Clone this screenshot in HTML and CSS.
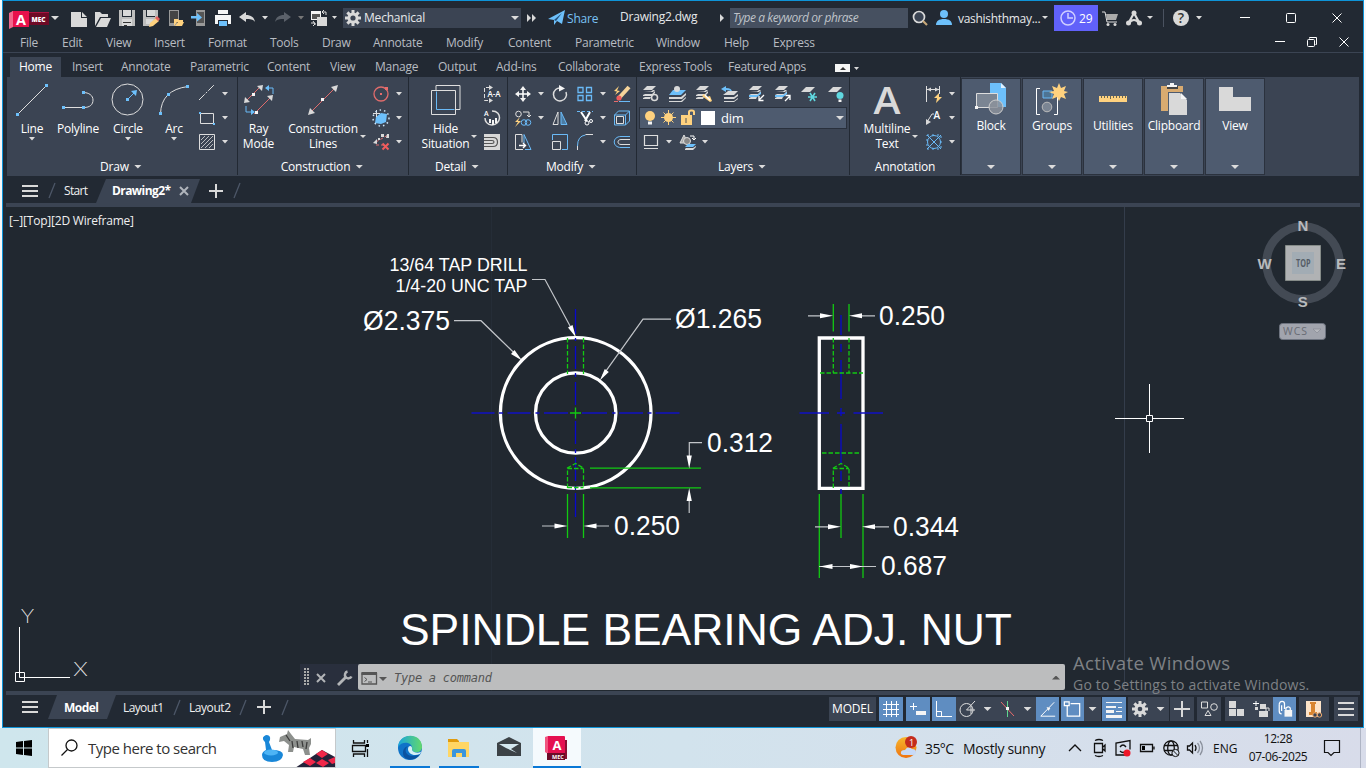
FILE: index.html
```html
<!DOCTYPE html>
<html lang="en">
<head>
<meta charset="utf-8">
<title>Drawing2.dwg</title>
<link rel="stylesheet" href="styles.css">
</head>
<body>
<div class="desk">
<div class="app">
<header class="title">
  <svg class="logo" width="40" height="20" viewBox="9 9 40 20"><path fill="#a8123f" d="M27 11h22v13H27z"/><path fill="#6e0a26" d="M29 12h20v12H29z"/><path fill="#e8114b" d="M12 10h17v16H12z"/><path fill="#f0688c" d="M9 12l4-2v16l-4 2z"/><text x="16" y="23.500" font-size="15" font-weight="700" textLength="10" lengthAdjust="spacingAndGlyphs">A</text><text x="31.500" y="21" font-size="7" font-weight="800" textLength="14" lengthAdjust="spacingAndGlyphs">MEC</text></svg>
  <i class="ar big"></i>
  <svg class="ic ml6" viewBox="0 0 24 24"><path class="fl" d="M4 6h10v6h6v9H4zM15 6l5 5h-5z"/></svg>
  <svg class="ic" viewBox="0 0 24 24"><path class="fl" d="M4 20V6h5l2 2h6v3H9zM5 21l5-9h10l-4 9z"/></svg>
  <svg class="ic" viewBox="0 0 24 24"><path fill="#bdbdbd" d="M4 4h3v7h10V4h3v16H4z"/><path class="fl" d="M8 4h8v6H8zM7 13h10v7H7z"/><path fill="#333" d="M8 16h8v1H8zM9 19h3v1H9z"/></svg>
  <svg class="ic" viewBox="0 0 24 24"><path fill="#bdbdbd" d="M4 4h3v7h9V4h3v7l-7 9H4z"/><path class="fl" d="M8 4h8v6H8zM7 13h8l-4 5H7z"/><path class="fy" d="M10 21l1-4 6-5 3 3-6 5z"/><path fill="#e56262" d="M16 12l2-2 3 3-2 2z"/></svg>
  <svg class="ic" viewBox="0 0 24 24"><path fill="#999" d="M6 4h10v16H6z"/><path fill="#444" d="M7 5h8v12H7z"/><path class="fy" d="M11 20v-7h4l1 1h4v2h-6zM12 20l3-4h6l-2 4z"/></svg>
  <svg class="ic" viewBox="0 0 24 24"><path fill="#999" d="M9 4h9v16H9z"/><path fill="#555" d="M10 6h7v11h-7z"/><path class="fb" d="M4 10h6V7l5 4.500-5 4v-3H4z"/></svg>
  <svg class="ic" viewBox="0 0 24 24"><path class="fw" d="M7 4h10v4H7zM4 9h16v9h-3v-4H7v4H4z"/><path class="fb" d="M8 15h8v5H8z"/></svg>
  <svg class="ic" viewBox="0 0 24 24"><path class="fl" d="M4 11l7-5v3c5 0 8 2 9 7-2-3-5-3-9-3v3z"/></svg>
  <i class="ar"></i>
  <svg class="ic" viewBox="0 0 24 24"><path fill="#5b616a" d="M20 11l-7-5v3c-5 0-8 2-9 7 2-3 5-3 9-3v3z"/></svg>
  <i class="ar dim"></i>
  <svg class="ic" viewBox="0 0 24 24"><path class="fw" d="M4 5h10v9H4zM10 11h10v9H10z"/><path d="M5 8h8v5H5z" fill="#555"/><path class="fl" d="M10 11h10v9H10z"/><path class="l" d="M15 6h4v3M17 4l-2 2 2 2M4 17h4v2M6 15l2 3-2 2"/></svg>
  <i class="ar w7"></i>
  <div class="combo"><svg width="20" height="20" viewBox="-10 -10 20 20"><g class="fl"><circle r="5.500"/><path id="teeth" d="M-1.500-8h3v16h-3zM-8-1.500H8v3H-8zM-6.700-4.600l2.100-2.100L6.700 4.600 4.600 6.700zM4.600-6.700l2.100 2.100L-4.600 6.700-6.700 4.600z"/></g><circle r="2.600" fill="#3b4453"/></svg><span>Mechanical</span><i class="ar big"></i></div>
  <svg width="20" height="20" viewBox="0 0 20 20"><path class="fl" d="M6 6l4 4-4 4zM11 6l4 4-4 4z"/></svg>
  <svg class="plane" width="18" height="20" viewBox="1 0 18 20"><path class="fb" d="M0 11L17 2l-3 14-5-3-3 4v-5z"/><path d="M6 12l8-7-6 8" fill="#24507a"/></svg>
  <span class="share">Share</span>
  <span class="doc">Drawing2.dwg</span>
  <svg width="12" height="20" viewBox="0 0 12 20"><path class="fl" d="M4 6l4 4-4 4z"/></svg>
  <div class="find">Type a keyword or phrase</div>
  <svg class="ic" viewBox="0 0 24 24"><circle cx="11" cy="11" r="5.500" fill="#3b4453" stroke="#d9d9d9" stroke-width="1.700"/><path d="M15 15l4 4" stroke="#c9a878" stroke-width="2.200"/></svg>
  <svg class="ic" viewBox="0 0 24 24"><circle cx="12" cy="8" r="4" class="fb"/><path class="fb" d="M4 19c0-4 3-6 8-6s8 2 8 6z"/></svg>
  <span class="user">vashishthmay...</span><i class="ar w10"></i>
  <div class="trial"><svg width="18" height="18" viewBox="0 0 18 18"><circle cx="9" cy="9" r="7" fill="none" stroke="#d0cfff" stroke-width="1.500"/><path d="M9 4v5h5" fill="none" stroke="#d0cfff" stroke-width="1.500"/></svg><span>29</span></div>
  <svg class="ic" viewBox="0 0 24 24"><path class="l" d="M4 6h3l2 10h10"/><path fill="#aaa" d="M8 8h12l-2 6H9z"/><circle cx="10" cy="18.500" r="1.500" class="fl"/><circle cx="17" cy="18.500" r="1.500" class="fl"/></svg>
  <svg class="ic" viewBox="0 0 24 24"><path d="M12 7L6 18M12 7l6 11M7 17c3-4 7-4 10 0" fill="none" stroke="#d9d9d9" stroke-width="2.200"/><circle cx="12" cy="7" r="2.500" class="fl"/><circle cx="6.500" cy="17" r="2.500" class="fl"/><circle cx="17.500" cy="17" r="2.500" class="fl"/></svg>
  <i class="ar w8"></i><i class="vsep"></i>
  <svg class="ic q" viewBox="0 0 24 24"><circle cx="12" cy="12" r="8" class="fl"/><text x="12" y="17" text-anchor="middle" font-size="14" font-weight="600" class="qm">?</text></svg>
  <i class="ar"></i>
  <svg class="win first" viewBox="0 0 46 24"><path class="n" d="M18 11.500h10"/></svg>
  <svg class="win" viewBox="0 0 46 24"><rect class="n" x="18.500" y="7.500" width="9" height="9" rx="1"/></svg>
  <svg class="win" viewBox="0 0 46 24"><path class="n" d="M18.500 7.500l9 9M27.500 7.500l-9 9"/></svg>
</header>
<nav class="menu"><span>File</span><span>Edit</span><span>View</span><span>Insert</span><span>Format</span><span>Tools</span><span>Draw</span><span>Annotate</span><span>Modify</span><span>Content</span><span>Parametric</span><span>Window</span><span>Help</span><span>Express</span>
  <svg class="mdi" width="84" height="18" viewBox="1270 33 84 18"><path class="n" d="M1275 41.500h10M1339.500 37.500l9 9M1348.500 37.500l-9 9M1309.500 38.500v-1h7v7h-1"/><rect class="n" x="1307.500" y="39.500" width="7" height="7" rx="1"/></svg>
</nav>
<nav class="tabs"><span class="on">Home</span><span>Insert</span><span>Annotate</span><span>Parametric</span><span>Content</span><span>View</span><span>Manage</span><span>Output</span><span>Add-ins</span><span>Collaborate</span><span>Express Tools</span><span>Featured Apps</span><svg width="26" height="10" viewBox="0 0 26 10"><path class="fw" d="M0 1h15v8H0z"/><path d="M5 7l3-3 3 3z" fill="#333"/><path class="fl" d="M19 4h5l-2.500 3z"/></svg></nav>
<section class="ribbon">
  <div class="panel draw"><div class="tools">
    <div class="btn w48"><svg viewBox="0 0 36 36"><path class="l" d="M4 32L32 4"/><path class="fb" d="M2 31h3v3H2zM31 2h3v3h-3z"/></svg><span>Line</span><i class="ar"></i></div>
    <div class="btn w46"><svg viewBox="0 0 36 36"><path class="l" d="M3 25.500h21c6 0 9-3 9-7.500s-4-7.500-10-7.500"/><path class="fb" d="M2 24h3v3H2zM22 24h3v3h-3zM22 9h3v3h-3z"/></svg><span>Polyline</span></div>
    <div class="btn w54"><svg viewBox="0 0 36 36"><circle class="l" cx="17.500" cy="17.500" r="15.500"/><path class="b" d="M18 17l6-6"/><path class="fb" d="M16 16h3v3h-3zM27 8l-1 6-5-5z"/></svg><span>Circle</span><i class="ar"></i></div>
    <div class="btn w40"><svg viewBox="0 0 36 36"><path class="l" d="M4.500 32Q5 8 32 4.500"/><path class="fb" d="M3 30h3v3H3zM11 11h3v3h-3zM30 3h3v3h-3z"/></svg><span>Arc</span><i class="ar"></i></div>
    <div class="small one">
      <svg viewBox="0 0 24 24"><path class="l" stroke-dasharray="8 1.500 2 1.500" d="M4 18L19 3"/></svg><i class="ar"></i>
      <svg viewBox="0 0 24 24"><path class="l" d="M5.500 7.500h13v10h-13z"/><path class="fb" d="M4 6h2v2H4zM18 17h2v2h-2z"/></svg><i class="ar"></i>
      <svg viewBox="0 0 24 24"><path class="l" d="M4.500 4.500h15v15h-15z"/><path class="l" stroke-width=".8" d="M6 10l4-4M6 14l8-8M6 18L18 6M10 18l8-8M14 18l4-4"/></svg><i class="ar"></i>
    </div></div><div class="cap">Draw<i class="ar big"></i></div></div>
  <div class="panel cons"><div class="tools">
    <div class="btn w41"><svg viewBox="0 0 36 36"><path d="M6 18L19 5M13 32L30 15" stroke="#e06c6c"/><path class="fl" d="M22 3l-1 6-5-5zM3 21l1-6 5 5zM32 13l-1 6-5-5z"/><path class="fw" d="M11 11h3v3h-3zM14 29h3v3h-3z"/><path class="b" d="M26 6h6v6M5 24v6h6"/><path class="fb" d="M24 6l4-3v6zM14 30l-4-3v6z"/></svg><span>Ray<br>Mode</span></div>
    <div class="btn w76"><svg viewBox="0 0 36 36"><path d="M7 29L29 7" stroke="#e06c6c"/><path class="fl" d="M33 3l-2 7-5-5zM3 33l2-7 5 5z"/><path class="fw" d="M16 16h3v3h-3z"/></svg><span>Construction<br>Lines</span></div><i class="ar side"></i>
    <div class="small one">
      <svg viewBox="0 0 24 24"><circle cx="12" cy="12" r="7" fill="none" stroke="#e06c6c" stroke-width="1.300"/><path fill="#e86c6c" d="M11 11h2v2h-2zM16 5h3v3h-3z"/></svg><i class="ar"></i>
      <svg viewBox="0 0 24 24"><path class="fb" d="M7 11l5-4 6 1-1 8-5 2-6-1z"/><path class="l" d="M4 7.500h7M7.500 4v7"/><circle cx="12" cy="12" r="8" fill="none" stroke="#cde6fa" stroke-width="1.500" stroke-dasharray="1.500 3"/></svg><i class="ar"></i>
      <svg viewBox="0 0 24 24"><path d="M7 12L19 5M7 15h8" stroke="#e06c6c" stroke-dasharray="3 2"/><path class="fl" d="M4 13l4-4v5zM18 4h2v4h-3zM12 4h3v3h-3zM9 8h2v2H9z"/><path d="M13.500 13.500l6 6M19.500 13.500l-6 6" stroke="#f05c5c" stroke-width="2"/></svg><i class="ar"></i>
    </div></div><div class="cap">Construction<i class="ar big"></i></div></div>
  <div class="panel det"><div class="tools">
    <div class="btn w51"><svg viewBox="0 0 36 36"><path class="l" d="M8 8V3.500h24v24h-4.500M3.500 8.500h24v24h-24z"/><path class="b" d="M8.500 9.500v18h18"/></svg><span>Hide<br>Situation</span></div><i class="ar side"></i>
    <div class="small">
      <svg viewBox="0 0 24 24"><path class="l" stroke-dasharray="4 2" d="M10 5.500H4.500v13H10"/><path class="fl" d="M9 3l4 2.500-4 2.500zM9 16l4 2.500-4 2.500z"/><text x="7.500" y="15" font-size="8" font-weight="600" textLength="13">A-A</text></svg>
      <svg viewBox="0 0 24 24"><path class="l" stroke-width="1.500" d="M12 5c11 0 9 14 0 14-5 0-7-4-7-7"/><text x="4" y="10" font-size="7" font-weight="600">A</text><path class="fw" d="M9 13h2v4H9zM12 14h2v5h-2zM15 12h2v5h-2z"/></svg>
      <svg viewBox="0 0 24 24"><path class="fl" d="M4 4h16v16H4z"/><path d="M4 7.500h9q4.500 0 4.500 4.500t-4.500 4.500H4M4 10.500h8q2 0 2 1.500t-2 1.500H4" fill="none" stroke="#555" stroke-width="1.200"/></svg>
    </div></div><div class="cap">Detail<i class="ar big"></i></div></div>
  <div class="panel mod"><div class="tools"><div class="small mg">
    <svg viewBox="0 0 24 24"><path class="n" stroke-width="1.500" d="M12 6v12M6 12h12"/><path class="fw" d="M12 4l3 4H9zM12 20l3-4H9zM4 12l4-3v6zM20 12l-4-3v6z"/></svg><i class="ar"></i>
    <svg viewBox="0 0 24 24"><path class="l" stroke-width="1.500" d="M13 6a6.500 6.500 0 1 0 5 4"/><path class="fw" d="M11 3l6 3.500-6 3z"/></svg>
    <svg viewBox="0 0 24 24"><path class="b" stroke-width="1.300" d="M5 5.500h5v5H5zM13.500 5.500h5v5h-5zM5 13.500h5v5H5zM13.500 13.500h5v5h-5z"/></svg><i class="ar"></i>
    <svg viewBox="0 0 24 24"><path d="M9 16L19 5" stroke="#f6d49a" stroke-width="4"/><circle cx="9" cy="16" r="2.600" fill="#f05c5c"/><path class="fy" d="M9 4L4 9l3 .5L5 13l5-4-3-.5z"/><path class="b" d="M9 19.500h11"/><path class="r" d="M4 19.500h4"/></svg>
    <svg viewBox="0 0 24 24"><circle class="l" cx="7.500" cy="8" r="2.800"/><path class="l" d="M12 6h6v4M16 9l2 2 2-2"/><path class="fy" d="M9 11l-5 5h3l-3 5 6-6H7z"/><circle class="b" cx="13" cy="16.500" r="2.800"/><circle class="b" cx="17" cy="16.500" r="2.800"/></svg><i class="ar"></i>
    <svg viewBox="0 0 24 24"><path class="l" d="M10 6v12.500H5z"/><path d="M13 6v12.500h6z" fill="#4c7ca3" stroke="#6abaf7"/></svg>
    <svg viewBox="0 0 24 24"><path class="b" stroke-dasharray="3 2" d="M4 5.500h16"/><path class="n" stroke-width="2" d="M8 6l6 9M17 6l-5 9"/><circle class="n" cx="14" cy="17" r="2"/><circle class="n" cx="18" cy="15" r="1.500"/></svg><i class="ar"></i>
    <svg viewBox="0 0 24 24"><path class="b" d="M4.500 9l4-4h11v10l-4 4M4.500 9v10h11V9zM15.500 9l4-4"/><path class="l" d="M6.500 10.500h7v7h-7z"/></svg>
    <svg viewBox="0 0 24 24"><path class="l" d="M12 19.500H4.500v-15H11v8"/><path class="b" d="M13 4.500l7 15h-6M13 4.500V13"/><path class="n" stroke-width="1.400" d="M8 15.500h6M12 13l2.500 2.500L12 18"/></svg><i class="ar none"></i>
    <svg viewBox="0 0 24 24"><path class="b" d="M4.500 10V4.500h15v15H14"/><path class="l" d="M4.500 11.500h8v8h-8z"/></svg>
    <svg viewBox="0 0 24 24"><path class="b" d="M4.500 20v-4q0-10 8-11"/><path class="l" d="M4.500 20v-4M12.500 4.500H20"/></svg><i class="ar"></i>
    <svg viewBox="0 0 24 24"><path class="b" d="M20 6.500h-9c-9 0-9 11 0 11h9"/><path class="l" d="M20 9.500h-9c-4 0-4 5 0 5h9"/></svg>
  </div></div><div class="cap">Modify<i class="ar big"></i></div></div>
  <div class="panel lay"><div class="tools col">
    <div class="lrow">
      <svg viewBox="0 0 24 24"><path id="stk" class="fl" d="M8 4h9l-4 4H4zM5 10h9l2-2h-2l-2 1.500zM4 13l2-1h7l3-3v2l-3 3H4zM4 16l2-1h6l-1 2H4z"/><circle cx="15.500" cy="15.500" r="3" fill="none" stroke="#d9d9d9" stroke-width="1.600"/></svg>
      <svg viewBox="0 0 24 24"><path class="fb" d="M8 8h13l-5 5H4z"/><path class="fl" d="M4 15h12l5-4v2l-4 4H4zM4 19h12l5-4v1l-4 4H4z"/><circle cx="12" cy="7" r="3" class="fl"/></svg>
      <svg viewBox="0 0 24 24"><use href="#stk"/><path class="fy" d="M12 12l3 3 3-1 2 5-2 1-8-6z"/><path class="n" stroke-width="1.500" d="M13 13l5 5"/></svg>
      <svg viewBox="0 0 24 24"><path class="fb" d="M3 7l5-3v2q6 0 6 4-2-2-6-2v2z"/><path class="fl" d="M10 9h10l-4 4H5zM6 15h10l4-3v2l-4 3H6zM6 19h10l4-3v1l-4 3H6z"/></svg>
      <svg viewBox="0 0 24 24"><use href="#stk"/><path class="fb" d="M4 13h8l4-3v2l-4 3H4z"/><path class="n" stroke-width="1.300" d="M19 13l-5 5M14 14v4.500h4.500"/></svg>
      <svg viewBox="0 0 24 24"><use href="#stk"/><path class="fb" d="M4 13h8l4-3v2l-4 3H4z"/><path class="n" stroke-width="1.300" d="M14 19l5-5M14.500 13.500H19V18"/></svg>
      <svg viewBox="0 0 24 24"><path class="fl" d="M9 5h9l-5 5H4z"/><path d="M11 15h9M13 11l5 8M18 11l-5 8" stroke="#60d8e0" stroke-width="1.600"/></svg>
      <svg viewBox="0 0 24 24"><path class="fl" d="M9 5h9l-5 5H4z"/><circle cx="16" cy="13.500" r="3.500" fill="#60d8e0"/><path class="fw" d="M14.500 17.500h3V20h-3z"/></svg>
    </div>
    <div class="layer"><svg width="72" height="20" viewBox="641 108 72 20"><circle cx="651" cy="116" r="5" class="fy"/><path class="fw" d="M649 121.500h4v3h-4z"/><circle cx="669.500" cy="117.500" r="4.500" class="fy"/><path d="M669.500 110v15M662 117.500h15M664.500 112.500l10 10M674.500 112.500l-10 10" stroke="#ffd27f"/><path d="M690 117v-5q0-1.500 2-1.500h1q2 0 2 1.500v3" fill="none" stroke="#ffd27f" stroke-width="2"/><path class="fy" d="M682 115h11v10h-11z"/><path d="M687 118v5" stroke="#555"/><path fill="#fff" d="M702 111h14v14h-14z"/></svg><i class="sw"></i><span>dim</span><i class="ar big"></i></div>
    <div class="lrow last"><svg viewBox="0 0 24 24"><path class="l" stroke-width="1.200" d="M5.500 5.500h13v10h-13zM5 18.500h14"/></svg><i class="ar"></i><svg viewBox="0 0 24 24"><path d="M5 13L9 5l4 8z" fill="#aaa" stroke="#ddd"/><circle cx="12" cy="11" r="3.500" fill="#888" stroke="#ddd"/><path class="n" d="M15 6h4v4M17 8l2 2 2-2"/><path class="fb" d="M13 14h8l-3 3h-8z"/><path class="fl" d="M10 19l1-1h7l3-2v1l-3 3h-8z"/></svg><i class="ar"></i></div>
  </div><div class="cap">Layers<i class="ar big"></i></div></div>
  <div class="panel ann"><div class="tools">
    <div class="btn w52"><svg viewBox="0 0 36 36"><text x="18" y="32" text-anchor="middle" font-size="38" font-weight="600" class="gt" textLength="27" lengthAdjust="spacingAndGlyphs">A</text></svg><span>Multiline<br>Text</span></div><i class="ar side"></i>
    <div class="small one">
      <svg viewBox="0 0 24 24"><path class="l" d="M4.500 4v16M17.500 4v8M5 7.500h12"/><path class="fl" d="M5 7.500l4-2v4zM17 7.500l-4-2v4z"/><path class="fy" d="M17 11l-5 5h3l-1 5 6-6h-3z"/></svg><i class="ar"></i>
      <svg viewBox="0 0 24 24"><path class="l" d="M5 16l5-8h2"/><path class="fl" d="M4 19v-6l5 3z"/><text x="11.500" y="13" font-size="10" font-weight="600">A</text></svg><i class="ar"></i>
      <svg viewBox="0 0 24 24"><circle class="b" cx="12" cy="12" r="6.500"/><path class="b" d="M5 5l14 14M19 5L5 19"/><path class="b" stroke-dasharray="2 3" d="M5 5h14v14H5z"/></svg><i class="ar"></i>
    </div></div><div class="cap">Annotation</div></div>
  <div class="fold"><svg viewBox="0 0 36 36"><path class="fb" d="M17 1h11l5 5v19H17z"/><path fill="#dff1ff" d="M28 1v5h5z"/><path fill="#7b8593" stroke="#ddd" d="M3.500 11.500h21v14h-21z"/><circle cx="23" cy="25" r="7" fill="#8c929b" fill-opacity=".85" stroke="#ccc"/><path class="fw" d="M2 24h3v3H2z"/></svg><span>Block</span><i class="ar big"></i></div>
  <div class="fold"><svg viewBox="0 0 36 36"><path class="n" d="M6 6.500H2.500v26H6M20 32.500h3.500V14"/><path d="M9 9h9v7H9z" fill="#4d7494" stroke="#6abaf7"/><circle cx="13" cy="25" r="4.800" fill="#7b8593" stroke="#bbb"/><path class="fy" d="M25 1l2 5 5-2-2 5 4 1-4 2 2 5-5-2-2 4-2-4-5 2 2-5-5-2 5-1-2-5 5 2z"/></svg><span>Groups</span><i class="ar big"></i></div>
  <div class="fold"><svg viewBox="0 0 36 36"><path class="fy" d="M4 14h28v6H4z"/><path d="M6.500 14v2M9.500 14v2M12.500 14v2M15.500 14v3M18.500 14v2M21.500 14v2M24.500 14v2M27.500 14v2M30.500 14v2" stroke="#665"/></svg><span>Utilities</span><i class="ar big"></i></div>
  <div class="fold"><svg viewBox="0 0 36 36"><path fill="#d9ab70" d="M5 4h22v25H5z"/><path d="M11 4h11v3H11z" fill="#444"/><path class="fw" d="M11 3h3V1h4v2h3v2H11z"/><path fill="#4e5b6f" d="M12 10h20v23H12z"/><path class="fl" d="M13 11h11l7 7v15H13z"/><path class="fw" d="M25 11v6h6z"/></svg><span>Clipboard</span><i class="ar big"></i></div>
  <div class="fold"><svg viewBox="0 0 36 36"><path class="fl" d="M2 5h14v10h18v14H2z"/></svg><span>View</span><i class="ar big"></i></div>
</section>
<nav class="files"><svg width="240" height="24" viewBox="7 179 240 24"><path class="t" d="M106 179h94l-9 24H96z"/><path class="fl" d="M22 185h16v2H22zM22 190h16v2H22zM22 195h16v2H22zM209 190h14v2h-14zM215 184h2v14h-2z"/><path d="M49 198l6-15M234 198l6-15" stroke="#4c5667" stroke-width="1.300"/><path d="M180 187l8 8M188 187l-8 8" stroke="#b0b5bc" stroke-width="2"/><text x="64" y="195" textLength="24">Start</text><text class="bd" x="112" y="195" textLength="59">Drawing2*</text></svg></nav>
<main class="canvas">
<svg width="1354" height="484" viewBox="6 207 1354 484">
  <path d="M1124.500 207v484" stroke="#343d4b"/><path d="M491.500 207v484" stroke="#252d37"/>
  <text x="9" y="225" font-size="12" class="vp" textLength="125">[−][Top][2D Wireframe]</text>
  <g fill="none" stroke="#fff" stroke-width="3.300"><circle cx="575.700" cy="413" r="75.300"/><circle cx="575.700" cy="413" r="40.200"/><path d="M819.300 338h43.700v150.300h-43.700z"/></g>
  <path class="cl" d="M471.500 413h23M499 413h4M507.500 413h23M535.500 413h4M544 413h24M582 413h25M612 413h3.500M619 413h24M647.500 413h4M655.500 413h24M799.500 413h29.500M837 413h8M853.500 413h29.500"/>
  <path class="cv" d="M575.500 309v25M575.500 338v3M575.500 346v23M575.500 373v4M575.500 382v23M575.500 421v23M575.500 449v4M575.500 457v24M575.500 486v4M575.500 493v24M841 315v20M841 344v8M841 360v39M841 408v8M841 424v39M841 471v10M841 489v5"/>
  <g class="g"><path d="M570 413h11M575.500 407.500v11M590 468.200h111M590 487.800h111M567.500 494v44M583.500 494v44M833.300 304v27.500M849 304v27.500M819.300 494v84M863 494v84M841 494v44"/>
  <path stroke-dasharray="4.500 2" d="M567.500 338v36M583.500 338v36M567.500 488v-20l8-4.500 8 4.500v20M567.500 468.500h16M567.500 487.500h16M833.300 338v35M849 338v35M820 373h43M822 453h39M833.300 488v-20l7.700-4.500 8 4.500v20M833 468.500h16"/></g>
  <g class="ld"><path d="M532 279.500h13l28 52M454 320.700h27l36 35M671 319.200h-28l-40 56M542 526h15M594 526h15M702 442.700h-12.700V458M689.200 500v13M808 315.800h15M859 315.800h16M815 526.800h16M873 526.800h16M819 566.500h57"/></g>
  <g fill="#fff"><path d="M576 337.500l-8-10 4.500-2.500zM522 360.500l-11-6.500 3.500-4zM599.800 380.500l5-11.500 4 3zM567.500 526l-13-2.500v5zM583.500 526l13-2.500v5zM689.200 468.500l-2.600-13h5.200zM689.200 488l-2.600 13h5.200zM833 315.800l-13-2.500v5zM849 315.800l13-2.500v5zM841 526.800l-13-2.500v5zM862 526.800l13-2.500v5zM819.500 566.500l13-2.500v5zM863 566.500l-13-2.500v5z"/></g>
  <g class="dt"><g font-size="18.500"><text x="389.500" y="270.700" textLength="138" lengthAdjust="spacingAndGlyphs">13/64 TAP DRILL</text><text x="395.500" y="291.500" textLength="132" lengthAdjust="spacingAndGlyphs">1/4-20 UNC TAP</text></g>
  <g font-size="27"><text x="363" y="330" textLength="87" lengthAdjust="spacingAndGlyphs">Ø2.375</text><text x="675" y="328" textLength="87" lengthAdjust="spacingAndGlyphs">Ø1.265</text><text x="707" y="452" textLength="66" lengthAdjust="spacingAndGlyphs">0.312</text><text x="614" y="535" textLength="66" lengthAdjust="spacingAndGlyphs">0.250</text><text x="879" y="325" textLength="66" lengthAdjust="spacingAndGlyphs">0.250</text><text x="893" y="536" textLength="66" lengthAdjust="spacingAndGlyphs">0.344</text><text x="881" y="575" textLength="66" lengthAdjust="spacingAndGlyphs">0.687</text></g>
  <text x="400" y="645" font-size="45" textLength="612" lengthAdjust="spacingAndGlyphs">SPINDLE BEARING ADJ. NUT</text></g>
  <path class="n" d="M1115 418.500h31M1153 418.500h31M1149.500 384v31M1149.500 422v31M1146.500 415.500h6v6h-6zM19.500 627v50.500M15.500 672.500h9v9h-9zM19.500 677.500H70"/>
  <g class="uc" font-size="18"><text x="20.500" y="623" textLength="14" lengthAdjust="spacingAndGlyphs">Y</text><text x="73" y="676" textLength="15" lengthAdjust="spacingAndGlyphs">X</text></g>
  <circle cx="1303" cy="263" r="36.500" fill="none" stroke="#434a54" stroke-width="8.500"/>
  <path fill="#b0b2b4" stroke="#858b88" d="M1285.500 245.500h35v35h-35z"/><path fill="#a2acb4" d="M1292 252h22v22h-22z"/>
  <g class="vc"><text x="1297.500" y="230.500">N</text><text x="1297.800" y="306.500">S</text><text x="1257.500" y="268.500">W</text><text x="1336" y="268.500">E</text></g>
  <text x="1296" y="267" font-size="10.500" font-weight="700" class="top" textLength="14.500" lengthAdjust="spacingAndGlyphs">TOP</text>
  <rect x="1279.500" y="323.500" width="46" height="16" rx="3" fill="#a1a4ad" stroke="#6e7480"/><text x="1283" y="334.500" font-size="10.500" class="wcs" textLength="24">WCS</text><path d="M1313 329h8l-4 4z" fill="#b5b7bd" stroke="#878a94" stroke-width=".7"/>
</svg>
<div class="cmd"><svg width="58" height="26" viewBox="300 664 58 26"><path fill="#aaa" d="M304 668h2v2h-2zM307 668h2v2h-2zM304 671h2v2h-2zM307 671h2v2h-2zM304 674h2v2h-2zM307 674h2v2h-2zM304 677h2v2h-2zM307 677h2v2h-2zM304 680h2v2h-2zM307 680h2v2h-2zM304 683h2v2h-2zM307 683h2v2h-2z"/><path d="M317 674l8 8M325 674l-8 8" stroke="#b3b5b8" stroke-width="2"/><path d="M338 685l8-8" stroke="#b3b5b8" stroke-width="2.800"/><path d="M347.500 671.500a3.500 3.500 0 1 0 4 5" fill="none" stroke="#b3b5b8" stroke-width="2.500"/></svg>
 <div class="cin"><svg width="34" height="24" viewBox="359 665 34 24"><path d="M363 672.500h14.500v10.500H363z" fill="none" stroke="#555" stroke-width="1.300"/><path d="M362.500 671h15.500v3h-15.500z" fill="#555"/><path d="M365.500 676.500l2.500 2-2.500 2M369 681h4" fill="none" stroke="#555"/><path fill="#555" d="M380 676h8l-4 4z"/></svg><span>Type a command</span><i class="up"></i></div></div>
<div class="wm"><b>Activate Windows</b><span>Go to Settings to activate Windows.</span></div>
</main>
<footer class="status">
 <svg class="lt" width="284" height="24" viewBox="7 695 284 24"><path class="t" d="M57 695h59l-9 24H48z"/><path class="fl" d="M22 701h16v2H22zM22 706h16v2H22zM22 711h16v2H22zM257 706h14v2h-14zM263 700h2v14h-2z"/><path d="M174 715l6-15M240 715l6-15M282 715l6-15" stroke="#4c5667" stroke-width="1.300"/><text x="64" y="712" class="bd" textLength="35">Model</text><text x="123" y="712" textLength="41">Layout1</text><text x="189" y="712" textLength="42">Layout2</text></svg>
 <div class="sb"><span class="c47">MODEL</span>
 <svg class="c24 a g3" viewBox="0 0 24 24"><path class="n" d="M7.500 4v16M12.500 4v16M17.500 4v16M4 7.500h16M4 12.500h16M4 17.500h16"/></svg>
 <svg class="c24 a g3" viewBox="0 0 24 24"><path class="n" d="M4 9.500h7M7.500 6v7"/><path class="fw" d="M10 14h10v4H10z"/></svg>
 <svg class="c24 a g2" viewBox="0 0 24 24"><path class="n" d="M4.500 4v15.500H20M4.500 14.500h5v5"/></svg>
 <svg class="c24" viewBox="0 0 24 24"><circle class="l" cx="10.500" cy="13" r="6.500"/><path class="l" d="M19 4L10.500 13H19M15 9v8"/></svg><i class="ar c15"></i>
 <svg class="c24" viewBox="0 0 24 24"><path class="r" d="M6 5l13 14"/><path d="M12.500 4v16" stroke="#5fd68d"/><path class="fw" d="M11 10h3v3h-3z"/></svg><i class="ar c17"></i>
 <svg class="c23 a" viewBox="0 0 24 24"><path class="n" d="M20 19.500H5L19 5"/><path class="fw" d="M11 10l4 1-2 3z"/></svg>
 <svg class="c23 a g2" viewBox="0 0 24 24"><path class="n" stroke-width="1.300" d="M3.500 4.500h5v4h-5zM10 6.500h9.500v13h-13V9"/></svg><i class="ar c17"></i>
 <svg class="c24 a g1" viewBox="0 0 24 24"><path class="fw" d="M4 5h16v1H4zM4 9h10v2H4zM4 13h8v3H4zM14 14h6v1h-6zM4 18h16v3H4zM16 10h4v1h-4z"/></svg>
 <svg class="c24 g2" viewBox="-12 -12 24 24"><g class="fl"><circle r="5.500"/><use href="#teeth"/></g><circle r="2.300" fill="#3b4453"/></svg><i class="ar c17"></i>
 <svg class="c24 g1" viewBox="0 0 24 24"><path class="fl" d="M4 11h16v2H4zM11 4h2v16h-2z"/></svg>
 <svg class="c24 g3" viewBox="0 0 24 24"><path class="l" d="M4.500 5h6v6h-6zM8 18.500h6l-3-5z"/><circle class="l" cx="17" cy="10" r="3.300"/></svg>
 <svg class="c24 g4" viewBox="0 0 24 24"><path class="fl" d="M4 4h7v7H4zM4 12h7v7H4zM12 12h7v7h-7z"/></svg><svg class="c24" viewBox="0 0 24 24"><path class="n" d="M4 6.500h6M7 4v5"/><path class="fl" d="M6 10h3v3H6zM11 7h6v5h-6zM10 14h9v6h-9z"/><path class="l" d="M17 14v-3h3v3"/></svg><svg class="c23 a" viewBox="0 0 24 24"><path class="n" stroke-width="1.300" d="M6.500 7v7q0 3 2.500 3M12 12V6.500Q12 4 9.500 4T6.500 7M9 8v6M13.500 13v-2q3-2.500 4.500 0v2"/><path class="fw" d="M12 13h8v7h-8z"/></svg>
 <svg class="c30 g3" viewBox="0 0 30 24"><path fill="#fde3c8" d="M7 4h15v16H7z"/><path fill="#d8842f" d="M11 5h6v2h-1v8h2v3h-8v-3h2V7h-1z"/><circle cx="16" cy="18" r="2.200" fill="#3b4453" stroke="#e8a66b"/><circle cx="20.500" cy="18" r="2.200" fill="#3b4453" stroke="#e8a66b"/></svg>
 <svg class="c24 g5" viewBox="0 0 24 24"><path class="fl" d="M4 5h16v2H4zM4 11h16v2H4zM4 17h16v2H4z"/></svg></div>
</footer>
</div>
<div class="task">
 <svg width="48" height="40" viewBox="0 728 48 40"><path d="M16 742l7-1v6.500h-7zM24 741l8-1v7.500h-8zM16 748.500h7v6.500l-7-1zM24 748.500h8v7.500l-8-1z"/></svg>
 <div class="srch"><svg width="39" height="38" viewBox="48 729 39 38"><circle cx="70.500" cy="745.500" r="5.500" fill="none" stroke="#111" stroke-width="1.300"/><path d="M66.500 749.500l-6 6" stroke="#111" stroke-width="1.300"/></svg><span>Type here to search</span>
 <svg class="game" width="80" height="38" viewBox="256 729 80 38"><path fill="#1987d8" d="M265 741q-3-4 2-6 5 0 4 5l-1 2 3 8q11 0 11 5-1 7-11 7t-10-7q0-3 4-5l-1-8z"/><ellipse cx="272" cy="752.500" rx="7" ry="3" fill="#4db4f5"/><path fill="#8d908d" d="M281 737l7-3 1-4 3 4 4 5 13 1 3-2v6l-2 4 1 7h-5l-2-6-9-2-1 5h-5l1-7-5-4-5 1z"/><path d="M287 735l4 6M293 741l1 7M298 741l1 7M303 741l1 6M308 742l-1 7" stroke="#3c3c3c" stroke-width="1.300"/><path fill="#23233a" d="M296 768l27-18 13 7v11z"/><path fill="#f0284a" d="M317 754l6-4 6 4-6 4zM304 762l7-4 6 4-6 4zM329 760l7-3v6l-3 1zM317 763l6-4 7 4-6 4z"/></svg></div>
 <svg width="50" height="40" viewBox="336 728 50 40"><path d="M353.500 740v3h11v-3M353.500 757v-3h11v3M352.500 745.500h13v6h-13zM367.500 740v3M367.500 749v8" fill="none" stroke="#111" stroke-width="1.300"/><path d="M366 744h3v3h-3z"/></svg>
 <div class="pin u"><svg width="26" height="26" viewBox="0 0 26 26"><defs><linearGradient id="e1"><stop offset="0" stop-color="#18a4dc"/><stop offset="1" stop-color="#63d96c"/></linearGradient></defs><circle cx="13" cy="13" r="12" fill="#0f73c8"/><path fill="url(#e1)" d="M1 12C2-3 25-3 25 12c0 6-8 7-10 3 2-8-10-10-14-3z"/><path fill="#0b53a0" d="M11 11c-6 5 0 14 12 8-5 8-17 7-17-1 0-4 2-6 5-7z"/><path fill="#d5f0f5" d="M15 15c2 4 10 3 10 0l-2 4c-7 3-12-1-12-5s5-4 4 1z"/></svg></div>
 <div class="pin u"><svg width="24" height="26" viewBox="0 0 24 26"><path fill="#e09b0d" d="M1 4h9l2 2v3H1z"/><path fill="#ffd664" d="M1 7h21v15H1z"/><path fill="#3a96dd" d="M5 22v-6q0-2 2-2h10q2 0 2 2v6h-4v-4H9v4z"/></svg></div>
 <div class="pin"><svg width="26" height="26" viewBox="0 0 26 26"><path fill="#3c4246" d="M1 8l12-6 12 6v13H1z"/><path fill="#d5e8ef" d="M3 9h20l-8 5 6 4-11-5z"/></svg></div>
 <div class="pin u on"><svg width="26" height="26" viewBox="0 0 26 26"><path fill="#8a0f31" d="M5 5h18v19H5z"/><path fill="#f0557f" d="M1 2l3-1v18l-3-2z"/><path fill="#e51050" d="M4 1h16q1 0 1 1v17H4z"/><path fill="#6b0b28" d="M3 18h18v7H3z"/><text x="8.500" y="14.500" font-size="13" font-weight="700">A</text><text x="8" y="23.800" font-size="5.500" font-weight="700">MEC</text></svg></div>
 <svg class="tray" width="30" height="40" viewBox="892 728 30 40"><defs><linearGradient id="s" x2="0" y2="1"><stop offset="0" stop-color="#f6b62c"/><stop offset="1" stop-color="#ee7311"/></linearGradient></defs><circle cx="906" cy="747.500" r="10.500" fill="url(#s)"/><path fill="#c7daf8" d="M901 754q-1-4 4-4 3-5 7-1 4 0 4 3 0 3-3 3h-10z"/><circle cx="911" cy="742" r="6" fill="#c42b1c"/><text x="909" y="745.500" font-size="9">1</text></svg>
 <span class="wt">35°C</span><span class="ws">Mostly sunny</span>
 <svg width="144" height="40" viewBox="1064 728 144 40"><g fill="none" stroke="#111" stroke-width="1.300"><path d="M1069 751l6-6 6 6M1094.500 743.500h8v9h-8zM1103 747l2-2v6l-2-2M1095 740.500q4-2 8 0M1095 755.500q4 2 8 0M1128 755h-12v-12l14-2.500v9M1120 747q3-4 6 0M1120 751q3 3 6 0M1140.500 744.500h12v7h-12zM1154 746.500v3"/><circle cx="1171" cy="748" r="7.200"/><ellipse cx="1171" cy="748" rx="3.300" ry="7.200"/><path d="M1164 745.500h14M1164 750.500h10M1187.500 746v4h2l3 3v-10l-3 3zM1195 745q2 3 0 6"/><path stroke="#8a909c" d="M1197.500 743q4 5 0 10M1200 741q5 7 0 14"/></g><path d="M1142 746h3v4h-3z"/><circle cx="1175.500" cy="753" r="3.600" fill="#d5deeb" stroke="#111"/><path d="M1173 750.500l5 5" stroke="#111"/><circle cx="1127" cy="753" r="3.500" fill="#ee1728"/></svg>
 <span class="eng">ENG</span><div class="clock"><span>12:28</span><span class="date">07-06-2025</span></div>
 <svg width="30" height="40" viewBox="1318 728 30 40"><path d="M1325.500 740.500h15v12h-5.500l-3 3-3-3h-3.500z" fill="none" stroke="#111" stroke-width="1.200"/></svg><i class="peek"></i>
</div>
</div>
</body>
</html>
```
FILE: styles.css
```css
*{box-sizing:border-box}
body{margin:0;width:1366px;height:768px;overflow:hidden;font:12px/15px "Open Sans","Noto Sans",sans-serif;letter-spacing:-.2px;color:#e6e8ea;background:#f7f8fa}
svg{display:block;flex:none;overflow:visible}
svg text{fill:#fff;letter-spacing:0}
.desk{display:flex;flex-direction:column;height:768px}
.app{height:728px;margin:0 2px;border:1px solid #0e94d8;background:#222933;display:flex;flex-direction:column;flex:none}
.l{fill:none;stroke:#dedede}.n{fill:none;stroke:#fff}.b{fill:none;stroke:#6abaf7}.r{fill:none;stroke:#e86c6c}
.fl{fill:#d9d9d9}.fw{fill:#f5f5f5}.fb{fill:#6dc0fb}.fy{fill:#ffd27f}.t{fill:#3b4453}
.ar{flex:none;width:12px;height:4px;background:#dcdcdc;clip-path:polygon(3px 0,9px 0,6px 3.500px)}
.ar.big{clip-path:polygon(2px 0,10px 0,6px 4px)}
.ar.dim{background:#777}.ar.none{visibility:hidden}
.ar.w7{width:7px;clip-path:polygon(1px 0,6px 0,3.500px 3px)}.ar.w8{width:8px;clip-path:polygon(1px 0,7px 0,4px 3px)}
.ar.w10{width:10px;clip-path:polygon(2px 0,8px 0,5px 3px)}
.title{height:34px;display:flex;align-items:center;white-space:nowrap}
.title>span{flex:none}
.logo{margin:3px 0 0 6px}.ml6{margin-left:6px}.ic{width:24px;height:24px}
.combo{display:flex;align-items:center;width:178px;height:20px;margin-left:5px;background:#3b4453;flex:none}
.combo span{width:147px;padding:0 0 1px 1px}
.plane{margin-left:8px}
.share{width:53px;color:#79c2f5}.doc{width:96px;padding-bottom:4px}
.find{width:178px;height:20px;margin-left:2px;padding:2px 3px;background:#465060;color:#bfc3c9;font-style:italic;letter-spacing:-.45px;flex:none}
.user{width:84px;padding-left:2px;letter-spacing:-.3px}
.trial{width:44px;height:26px;margin-left:4px;background:#6161fa;display:flex;align-items:center;padding-left:5px;gap:2px;flex:none;color:#fff}
.vsep{width:1px;height:18px;background:#4a5260;margin-left:9px}.q{margin-left:5px}
svg .qm{fill:#333}
.win{width:46px;height:24px}.win.first{margin-left:17px}
.menu{height:18px;display:grid;grid-template-columns:42px 44px 48px 54px 62px 52px 51px 73px 62px 67px 81px 68px 49px 497px 84px;padding-left:17px;color:#b8bcc2;border-bottom:1px solid #3b4453;line-height:15px;letter-spacing:-.25px;white-space:nowrap}
.mdi{margin-top:-2px}
.tabs{height:24px;padding:4px 0 0 16px;display:grid;grid-template-columns:53px 49px 69px 77px 63px 45px 63px 58px 62px 81px 89px 107px 30px;color:#b8bcc2;line-height:20px;letter-spacing:-.25px;white-space:nowrap}
.tabs .on{background:#3b4453;color:#fff;width:51px;margin-left:-9px;padding-left:9px}
.tabs svg{margin-top:6px}
.ribbon{height:99px;margin:0 4px;background:#3b4453;display:flex;flex:none}
.panel{height:98px;border-right:1px solid #222933;padding-top:5px;flex:none}
.draw{width:231px}.cons{width:171px}.det{width:99px}.mod{width:129px}.lay{width:213px}.ann{width:111px}
.tools{height:76px;display:flex}.tools.col{display:block}
.cap{display:flex;justify-content:center;align-items:center;gap:3px;height:16px;color:#fff}
.cap .ar{margin-top:1px}
.btn{display:flex;flex-direction:column;align-items:center;text-align:center;white-space:nowrap;color:#fff;flex:none}
.btn svg{width:36px;height:36px}.btn span{margin-top:3px}.btn .ar{margin-top:1px}
.w48{width:50px}.w46{width:42px}.w54{width:58px}.w40{width:34px}.w41{width:41px}.w76{width:76px;margin-left:6px}.w51{width:51px;margin-left:11px}.w52{width:52px;margin-left:11px}
.side{width:6px;clip-path:polygon(0 0,6px 0,3px 3px);margin-top:53px}
.small{display:grid;grid-template-columns:24px 12px;grid-template-rows:24px 24px 24px;align-items:center;height:72px;margin-left:4px}
.small svg,.lrow svg{width:24px;height:24px}
.mg{grid-template-columns:24px 13px 25px 24px 13px 24px;margin-left:3px}
.det .small{grid-template-columns:24px;margin-left:3px}.cons .small{margin-left:2px}
.cons .w76,.ann .w52{margin-right:-1px}.cons .side,.ann .side{margin-right:1px}
.lrow{display:flex;align-items:center;height:24px;padding-left:2px;gap:2.400px}
.layer{height:22px;margin:1px 1px 0 2px;border:1px solid #29303c;background:#4e5b6f;display:flex;align-items:center;width:208px}
.layer span{width:121px;padding-left:8px;font-size:13px;color:#fff}.sw{width:1px}
.lrow.last{gap:0;margin-top:1px}
.ann .small{margin-left:3px}
svg .gt{fill:#d9d9d9}
.fold{width:60px;height:97px;margin:1px 1px 0 0;border:1px solid #2b323e;background:#4e5b6f;display:flex;flex-direction:column;align-items:center;color:#fff;padding-top:3px;flex:none}
.fold svg{width:36px;height:36px}.fold span{height:47px}
.files{height:25px;margin:3px 4px 0;flex:none}
.files,.lt{font-size:12px}.files text,.lt text{fill:#f0f0f0}
svg .bd{font-weight:700;fill:#fff}
.canvas{position:relative;height:492px;margin:-1px 3px 0;border-top:4px solid #3b4453;border-bottom:4px solid #3b4453;background:#212830;flex:none}
.cl,.cv{fill:none;stroke:#1010c4;stroke-width:1.300}.cv{stroke:#0808cc}
.g{fill:none;stroke:#12c912;stroke-width:1.300}
.ld{fill:none;stroke:#c2c5c9;stroke-width:1.200}
.dt{font-family:"Liberation Sans",Arial,sans-serif}
.uc text{font-family:Inter,sans-serif;font-weight:200;fill:#ddd}
.vc{font:700 15px "Liberation Sans",sans-serif}.vc text{fill:#b8babd}
svg .top{fill:#555c66}svg .wcs{fill:#686b74}svg .vp{fill:#f0f0f0}
.cmd{position:absolute;left:294px;top:457px;width:765px;height:26px;display:flex;background:#292f3d}
.cin{width:707px;height:26px;padding-top:1px;background:#bcbdbe;display:flex;align-items:center;color:#555;font:italic 12px "DejaVu Sans Mono",monospace;letter-spacing:-.25px;border-radius:2px}
.cin span{width:660px;padding-left:2px}
.up{width:8px;height:4px;background:#555;clip-path:polygon(4px 0,8px 4px,0 4px)}
.wm{position:absolute;left:1067px;top:444px;display:flex;flex-direction:column;color:#7e8185;white-space:nowrap}
.wm b{font-size:18.500px;line-height:23px;font-weight:400;letter-spacing:.35px}.wm span{font-size:14px;line-height:22px;letter-spacing:.2px}
.status{height:32px;margin:0 4px;display:flex;justify-content:space-between;flex:none}
.sb{display:flex;align-items:center;height:24px;margin-top:2px;padding-right:1px}
.sb>*{background-color:#3b4453;height:24px;flex:none}
.c47{width:47px;line-height:23px;text-align:center;color:#fff}
.sb svg.a{background:#5f8dc1}
.c23{width:23px}.c24{width:24px}.c30{width:30px}
.g1{margin-left:1px}.g2{margin-left:2px}.g3{margin-left:3px}.g4{margin-left:4px}.g5{margin-left:5px}
.sb .ar{clip-path:none;background:#3b4453;height:24px;display:flex;align-items:center;justify-content:center}
.sb .ar::before{content:"";width:8px;height:4px;background:#dcdcdc;clip-path:polygon(0 0,8px 0,4px 4px)}
.sb .c15{width:15px}.sb .c17{width:17px}
.task{height:40px;background:linear-gradient(90deg,#cfe6ed,#d2e3ed 50%,#d8dcea);display:flex;align-items:center;color:#111;letter-spacing:0;white-space:nowrap}
.srch{width:288px;height:40px;border:1px solid #c5c9cb;background:#fff;display:flex;align-items:center;font-size:15px;letter-spacing:-.5px;color:#333;overflow:hidden;flex:none}
.srch span{width:167px;flex:none}
.pin{width:49px;height:40px;display:flex;align-items:center;justify-content:center;flex:none}
.pin.u{border-bottom:2px solid #0a78d6;padding-top:2px;width:40px;margin:0 5px 0 4px}
.pin.u.on{width:48px;margin:0;background:#f5fafd}
.tray{margin-left:311px}
.wt{width:38px;font-size:14px;letter-spacing:-.6px;margin-left:3px;flex:none}.ws{width:101px;font-size:14px;letter-spacing:-.35px;flex:none}
.eng{width:30px;margin-left:5px;flex:none}.clock{display:flex;flex-direction:column;align-items:center;width:70px;margin-right:4px;line-height:18px;letter-spacing:-.4px;flex:none}
.task svg{flex:none}
.peek{width:1px;height:40px;background:#aeb4c4;margin-left:13px}
```
